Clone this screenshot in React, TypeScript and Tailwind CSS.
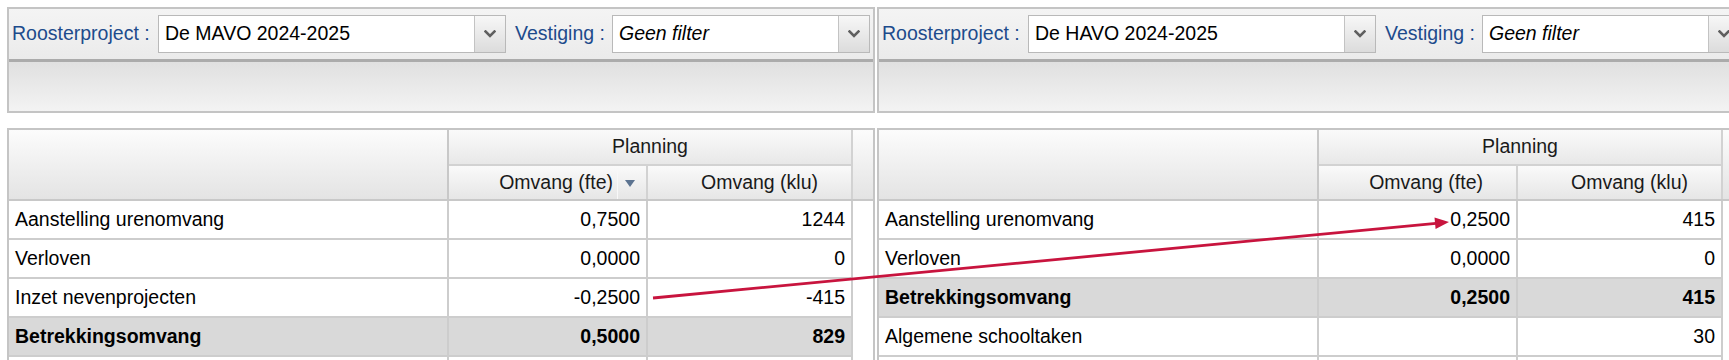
import React from "react";

type Row = { label: string; fte: string; klu: string; bold?: boolean };

const Chevron = () => (
  <svg width="12" height="8" viewBox="0 0 12 8" className="block">
    <path d="M1.5 1.5 L6 6 L10.5 1.5" fill="none" stroke="#5f5f5f" strokeWidth="2.6" strokeLinecap="square" />
  </svg>
);

function Combo({ value, italic, width }: { value: string; italic?: boolean; width: string }) {
  return (
    <div className={`${width} h-[38px] flex shrink-0 border border-[#b9b9b9] bg-white`}>
      <div className={`flex-1 flex items-center pl-[6px] text-black ${italic ? "italic" : ""}`}>{value}</div>
      <div className="w-[31px] flex items-center justify-center border-l border-[#c3c3c3] bg-gradient-to-b from-[#f7f7f7] to-[#dcdcdc]">
        <Chevron />
      </div>
    </div>
  );
}

function Panel({ project, rows, sortArrow }: { project: string; rows: Row[]; sortArrow?: boolean }) {
  return (
    <div className="w-[868px] shrink-0">
      <div className="border-2 border-[#c4c4c4]">
        <div className="h-[53px] border-b-[3px] border-[#ababab] bg-gradient-to-b from-[#f4f4f4] to-[#ebebeb] flex items-center pl-[3px]">
          <div className="w-[146px] shrink-0 text-[#1d4b8c]">Roosterproject :</div>
          <Combo value={project} width="w-[348px]" />
          <div className="ml-[9px] w-[97px] shrink-0 text-[#1d4b8c]">Vestiging :</div>
          <Combo value="Geen filter" italic width="w-[258px]" />
        </div>
        <div className="h-[49px] bg-gradient-to-b from-[#e0e0e0] to-[#f3f3f3]" />
      </div>

      <div className="mt-[15px] border-2 border-b-0 border-[#c5c5c5]">
        <div className="flex bg-gradient-to-b from-[#fcfcfc] to-[#e3e3e3] text-[#1a1a1a]">
          <div className="w-[440px] h-[71px] border-r-2 border-b-2 border-[#c8c8c8]" />
          <div className="w-[404px] flex flex-col">
            <div className="h-[36px] border-b-2 border-r-2 border-[#d2d2d2] flex items-center justify-center bg-gradient-to-b from-[#fafafa] to-[#e8e8e8]">
              Planning
            </div>
            <div className="flex h-[35px] border-b-2 border-[#c8c8c8]">
              <div className="relative w-[199px] border-r-2 border-[#d2d2d2] flex items-center justify-end pr-[33px] bg-gradient-to-b from-[#fafafa] to-[#e6e6e6]">
                Omvang (fte)
                {sortArrow && (
                  <>
                    <div className="absolute right-[28px] top-[2px] bottom-0 w-px bg-[#f8f8f8]" />
                    <svg width="10" height="7" viewBox="0 0 10 7" className="absolute right-[11px] top-[14px]">
                      <path d="M0 0 L10 0 L5 7 Z" fill="#5c7390" />
                    </svg>
                  </>
                )}
              </div>
              <div className="w-[205px] border-r-2 border-[#d2d2d2] flex items-center justify-end pr-[33px] bg-gradient-to-b from-[#fafafa] to-[#e6e6e6]">
                Omvang (klu)
              </div>
            </div>
          </div>
          <div className="w-[20px] h-[71px] border-b-2 border-[#c8c8c8]" />
        </div>
        {rows.map((r, i) => (
          <div key={i} className={`flex ${r.bold ? "font-bold" : ""} text-black`}>
            <div className={`w-[440px] h-[39px] border-r-2 border-b-2 border-[#cdcdcd] flex items-center pl-[6px] ${r.bold ? "bg-[#d9d9d9]" : "bg-white"}`}>
              {r.label}
            </div>
            <div className={`w-[199px] h-[39px] border-r-2 border-b-2 border-[#cdcdcd] flex items-center justify-end pr-[6px] ${r.bold ? "bg-[#d9d9d9]" : "bg-white"}`}>
              {r.fte}
            </div>
            <div className={`w-[205px] h-[39px] border-r-2 border-b-2 border-[#cdcdcd] flex items-center justify-end pr-[6px] ${r.bold ? "bg-[#d9d9d9]" : "bg-white"}`}>
              {r.klu}
            </div>
            <div className="w-[20px] h-[39px] bg-white" />
          </div>
        ))}
      </div>
    </div>
  );
}

const leftRows: Row[] = [
  { label: "Aanstelling urenomvang", fte: "0,7500", klu: "1244" },
  { label: "Verloven", fte: "0,0000", klu: "0" },
  { label: "Inzet nevenprojecten", fte: "-0,2500", klu: "-415" },
  { label: "Betrekkingsomvang", fte: "0,5000", klu: "829", bold: true },
  { label: "", fte: "", klu: "" },
];

const rightRows: Row[] = [
  { label: "Aanstelling urenomvang", fte: "0,2500", klu: "415" },
  { label: "Verloven", fte: "0,0000", klu: "0" },
  { label: "Betrekkingsomvang", fte: "0,2500", klu: "415", bold: true },
  { label: "Algemene schooltaken", fte: "", klu: "30" },
  { label: "", fte: "", klu: "" },
];

export default function App() {
  return (
    <div className="relative w-[1729px] h-[360px] overflow-hidden bg-white font-['Liberation_Sans',Arial,sans-serif] text-[19.5px] leading-none">
      <div className="flex pl-[7px] pt-[7px] gap-[2px]">
        <Panel project="De MAVO 2024-2025" rows={leftRows} sortArrow />
        <Panel project="De HAVO 2024-2025" rows={rightRows} />
      </div>
      <svg className="absolute inset-0 pointer-events-none" width="1729" height="360" viewBox="0 0 1729 360">
        <line x1="653" y1="298" x2="1436" y2="223.3" stroke="#c8143e" strokeWidth="2.8" />
        <polygon points="1449,222 1435.6,229 1434.5,217.6" fill="#c8143e" />
      </svg>
    </div>
  );
}
